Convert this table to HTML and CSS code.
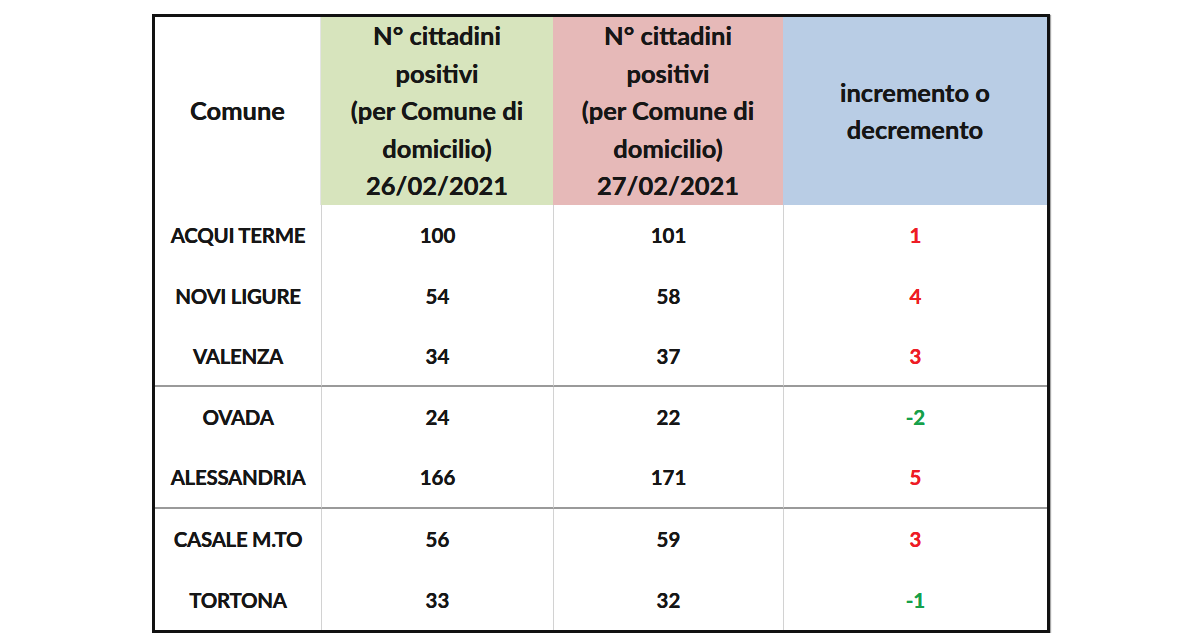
FILE: index.html
```html
<!DOCTYPE html>
<html lang="it">
<head>
<meta charset="utf-8">
<link rel="stylesheet" href="styles.css">
</head>
<body>
<div class="page">
<table class="tab">
<colgroup>
<col class="c1"><col class="c2"><col class="c3"><col class="c4">
</colgroup>
<thead>
<tr>
<th class="h-com">Comune</th>
<th class="h-green">N° cittadini<br>positivi<br>(per Comune di<br>domicilio)<br>26/02/2021</th>
<th class="h-pink">N° cittadini<br>positivi<br>(per Comune di<br>domicilio)<br>27/02/2021</th>
<th class="h-blue">incremento o<br>decremento</th>
</tr>
</thead>
<tbody>
<tr class="r"><td>ACQUI TERME</td><td>100</td><td>101</td><td class="up">1</td></tr>
<tr class="r"><td>NOVI LIGURE</td><td>54</td><td>58</td><td class="up">4</td></tr>
<tr class="r sep"><td>VALENZA</td><td>34</td><td>37</td><td class="up">3</td></tr>
<tr class="r"><td>OVADA</td><td>24</td><td>22</td><td class="down">-2</td></tr>
<tr class="r sep"><td>ALESSANDRIA</td><td>166</td><td>171</td><td class="up">5</td></tr>
<tr class="r"><td>CASALE M.TO</td><td>56</td><td>59</td><td class="up">3</td></tr>
<tr class="r"><td>TORTONA</td><td>33</td><td>32</td><td class="down">-1</td></tr>
</tbody>
</table>
</div>
</body>
</html>
```
FILE: styles.css
```css
html, body {
  margin: 0;
  padding: 0;
  background: #ffffff;
}
.page {
  padding: 14px 0 0 152px;
}
.tab {
  border-collapse: separate;
  border-spacing: 0;
  border: 3px solid #111111;
  box-shadow: 1px 1px 1px rgba(0,0,0,0.35);
  table-layout: fixed;
  width: 898px;
  font-family: Lato, "Open Sans", sans-serif;
  font-weight: 700;
  color: #161616;
}
.c1 { width: 166px; }
.c2 { width: 232px; }
.c3 { width: 230px; }
.c4 { width: 264px; }
th {
  height: 188px;
  padding: 0;
  font-size: 25.5px;
  line-height: 37.5px;
  font-weight: 700;
  text-align: center;
  vertical-align: middle;
  text-shadow: 0 0 0.6px #161616;
}
.h-com { background: #ffffff; border-right: 1px solid #e4e4e4; }
.h-green { background: #d7e4bd; }
.h-pink { background: #e6b9b8; }
.h-blue { background: #b9cde5; }
td {
  height: 60.6px;
  padding: 0;
  font-size: 20.5px;
  text-align: center;
  vertical-align: middle;
  border-left: 1px solid #d2d2d2;
  text-shadow: 0 0 0.5px currentColor;
}
td:first-child { border-left: none; letter-spacing: -0.3px; }
.sep td { height: 59px; border-bottom: 2px solid #9a9a9a; }
.up { color: #ee1c25; }
.down { color: #17a04a; }
```
